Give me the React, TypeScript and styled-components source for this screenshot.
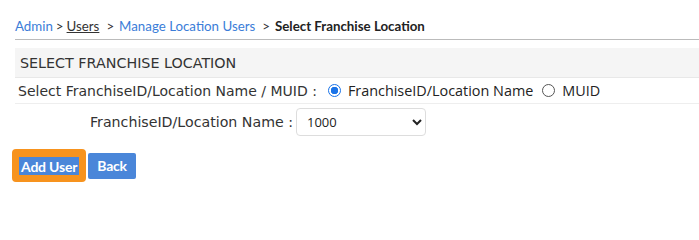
import styled, { createGlobalStyle } from "styled-components";

const GlobalStyle = createGlobalStyle`
  body {
    margin: 0;
    background: #fff;
    font-family: "Open Sans", "Liberation Sans", sans-serif;
    color: #333;
  }
`;

const SANS = `"Open Sans", "Liberation Sans", sans-serif`;
const NARROW = `Lato, "Liberation Sans", sans-serif`;
const WIDE = `"DejaVu Sans", "Liberation Sans", sans-serif`;

export default function App() {
  return (
    <>
      <GlobalStyle />
      <Page>
        <Breadcrumb>
          <CrumbLink href="#">Admin</CrumbLink>
          <Sep>&gt;</Sep>
          <CrumbLink href="#" $underline>
            Users
          </CrumbLink>
          <Sep $wide>&gt;</Sep>
          <CrumbLink href="#">Manage Location Users</CrumbLink>
          <Sep $wide>&gt;</Sep>
          <Current>Select Franchise Location</Current>
        </Breadcrumb>
        <Panel>
          <PanelHeader>SELECT FRANCHISE LOCATION</PanelHeader>
          <Row>
            <Label>Select FranchiseID/Location Name / MUID :</Label>
            <RadioGroup>
              <RadioItem>
                <Radio $checked />
                FranchiseID/Location Name
              </RadioItem>
              <RadioItem>
                <Radio />
                MUID
              </RadioItem>
            </RadioGroup>
          </Row>
          <FieldRow>
            <FieldLabel>FranchiseID/Location Name :</FieldLabel>
            <Select defaultValue="1000">
              <option>1000</option>
            </Select>
          </FieldRow>
        </Panel>
        <Actions>
          <Button $focused>Add User</Button>
          <Button>Back</Button>
        </Actions>
      </Page>
    </>
  );
}

const Page = styled.div`
  padding: 19px 0 0 15px;
`;

const Breadcrumb = styled.div`
  display: flex;
  align-items: baseline;
  font-family: ${NARROW};
  font-size: 13.3px;
  line-height: 15px;
  padding-bottom: 5px;
  border-bottom: 1px solid #bbb;
`;

const CrumbLink = styled.a<{ $underline?: boolean }>`
  color: ${(p) => (p.$underline ? "#333" : "#3b7dd8")};
  text-decoration: ${(p) => (p.$underline ? "underline" : "none")};
`;

const Sep = styled.span<{ $wide?: boolean }>`
  color: #333;
  margin: ${(p) => (p.$wide ? "0 5px 0 7px" : "0 3px")};
`;

const Current = styled.span`
  font-weight: 700;
  color: #222;
`;

const Panel = styled.div`
  margin-top: 8px;
`;

const PanelHeader = styled.div`
  background: #f5f5f5;
  border-bottom: 1px solid #e8e8e8;
  font-family: ${WIDE};
  font-size: 14.3px;
  color: #333;
  height: 29px;
  line-height: 30px;
  padding-left: 5px;
`;

const Row = styled.div`
  display: flex;
  align-items: center;
  height: 25px;
  border-bottom: 1px solid #eee;
  padding-left: 3px;
`;

const Label = styled.span`
  font-family: ${WIDE};
  font-size: 14px;
  color: #333;
`;

const RadioGroup = styled.div`
  display: flex;
  align-items: center;
  margin-left: 11px;
  gap: 9px;
`;

const RadioItem = styled.label`
  display: flex;
  align-items: center;
  gap: 7px;
  font-family: ${SANS};
  font-size: 14.4px;
  color: #222;
`;

const Radio = styled.span<{ $checked?: boolean }>`
  box-sizing: border-box;
  width: 13px;
  height: 13px;
  border-radius: 50%;
  border: ${(p) => (p.$checked ? "1.5px solid #1a73e8" : "1px solid #555")};
  background: ${(p) =>
    p.$checked ? "radial-gradient(circle, #1a73e8 0 3.5px, #fff 4px)" : "#fff"};
`;

const FieldRow = styled.div`
  display: grid;
  grid-template-columns: 278px auto;
  align-items: center;
  column-gap: 3px;
  padding-top: 4px;
  justify-content: start;
`;

const FieldLabel = styled.span`
  font-family: ${WIDE};
  font-size: 14.2px;
  color: #333;
  text-align: right;
`;

const Select = styled.select`
  width: 130px;
  height: 28px;
  border: 1px solid #ddd;
  border-radius: 4px;
  background: #fff;
  font-family: ${SANS};
  font-size: 13px;
  color: #222;
  padding-left: 6px;
`;

const Actions = styled.div`
  display: flex;
  align-items: center;
  gap: 2px;
  margin-top: 13px;
  margin-left: -3px;
`;

const Button = styled.button<{ $focused?: boolean }>`
  box-sizing: border-box;
  background: #4a86d9;
  color: #fff;
  border: none;
  border-radius: 2px;
  font-family: ${NARROW};
  font-weight: 700;
  font-size: 14px;
  letter-spacing: -0.2px;
  height: 26px;
  padding: 0 9px;
  ${(p) =>
    p.$focused &&
    `
    height: 33px;
    padding: 0 2px;
    border: 7px solid #f7931e;
    border-top-width: 8px;
    border-radius: 4px;
    outline: none;
  `}
`;
